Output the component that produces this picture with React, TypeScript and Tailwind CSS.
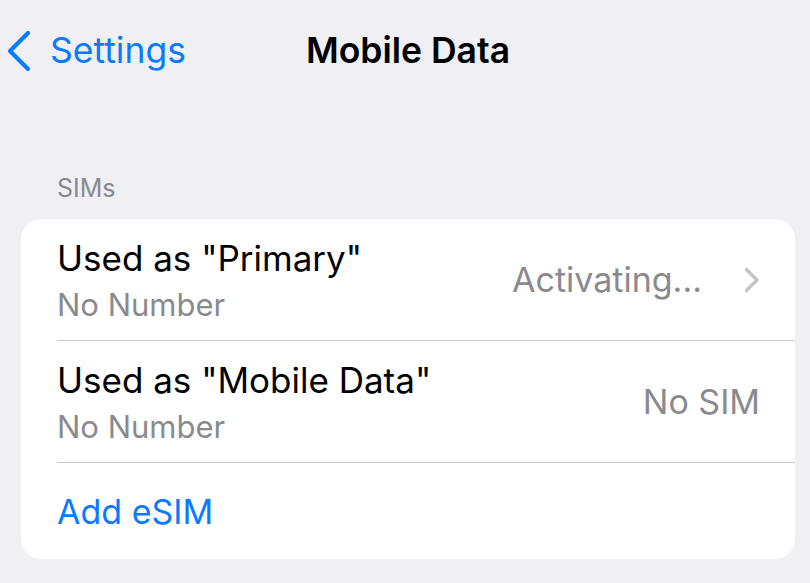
import { ReactNode } from "react";

const BLUE = "text-[#0a7aff]";

function BackChevron() {
  return (
    <svg width="24" height="42" viewBox="0 0 24 42" fill="none" className="shrink-0">
      <path
        d="M21 3 L3 21 L21 39"
        stroke="currentColor"
        strokeWidth="4.2"
        strokeLinecap="round"
        strokeLinejoin="round"
      />
    </svg>
  );
}

function RowChevron() {
  return (
    <svg width="16" height="26" viewBox="0 0 16 26" fill="none" className="shrink-0">
      <path
        d="M2.5 2.5 L13 13 L2.5 23.5"
        stroke="#c4c4c7"
        strokeWidth="3.2"
        strokeLinecap="round"
        strokeLinejoin="round"
      />
    </svg>
  );
}

interface SimRowProps {
  title: string;
  subtitle: string;
  detail: string;
  chevron?: boolean;
  children?: ReactNode;
}

function SimRow({ title, subtitle, detail, chevron }: SimRowProps) {
  return (
    <div className="flex h-[121px] items-center pr-[35px]">
      <div className="flex flex-1 flex-col">
        <span className="text-[35px] leading-[44px] text-black">{title}</span>
        <span className="mt-[6px] text-[31px] leading-[38px] text-[#8a8a8e]">{subtitle}</span>
      </div>
      <span className="text-[34px] text-[#8a8a8e]">{detail}</span>
      {chevron && (
        <span className="ml-[42px]">
          <RowChevron />
        </span>
      )}
    </div>
  );
}

export default function App() {
  return (
    <div className="min-h-[583px] w-full bg-[#efeff4] font-['Inter',sans-serif] antialiased">
      <header className="grid h-[102px] grid-cols-[1fr_auto_1fr] items-center pl-[6px]">
        <button className={`flex items-center gap-[19px] pl-[1px] ${BLUE}`}>
          <BackChevron />
          <span className="text-[35.5px]">Settings</span>
        </button>
        <h1 className="text-[35.5px] font-semibold text-black">Mobile Data</h1>
        <div />
      </header>

      <div className="pl-[21px] pr-[15px] pt-[71px]">
        <p className="pl-[36px] text-[25px] leading-[30px] text-[#8a8a8e]">SIMs</p>
        <div className="mt-[16px] overflow-hidden rounded-[20px] bg-white">
          <div className="pl-[36px]">
            <SimRow title={'Used as "Primary"'} subtitle="No Number" detail="Activating..." chevron />
            <div className="h-px bg-[#c8c8cc]" />
            <SimRow title={'Used as "Mobile Data"'} subtitle="No Number" detail="No SIM" />
            <div className="h-px bg-[#c8c8cc]" />
            <div className="flex h-[96px] items-center">
              <span className={`text-[34px] ${BLUE}`}>Add eSIM</span>
            </div>
          </div>
        </div>
      </div>
    </div>
  );
}
